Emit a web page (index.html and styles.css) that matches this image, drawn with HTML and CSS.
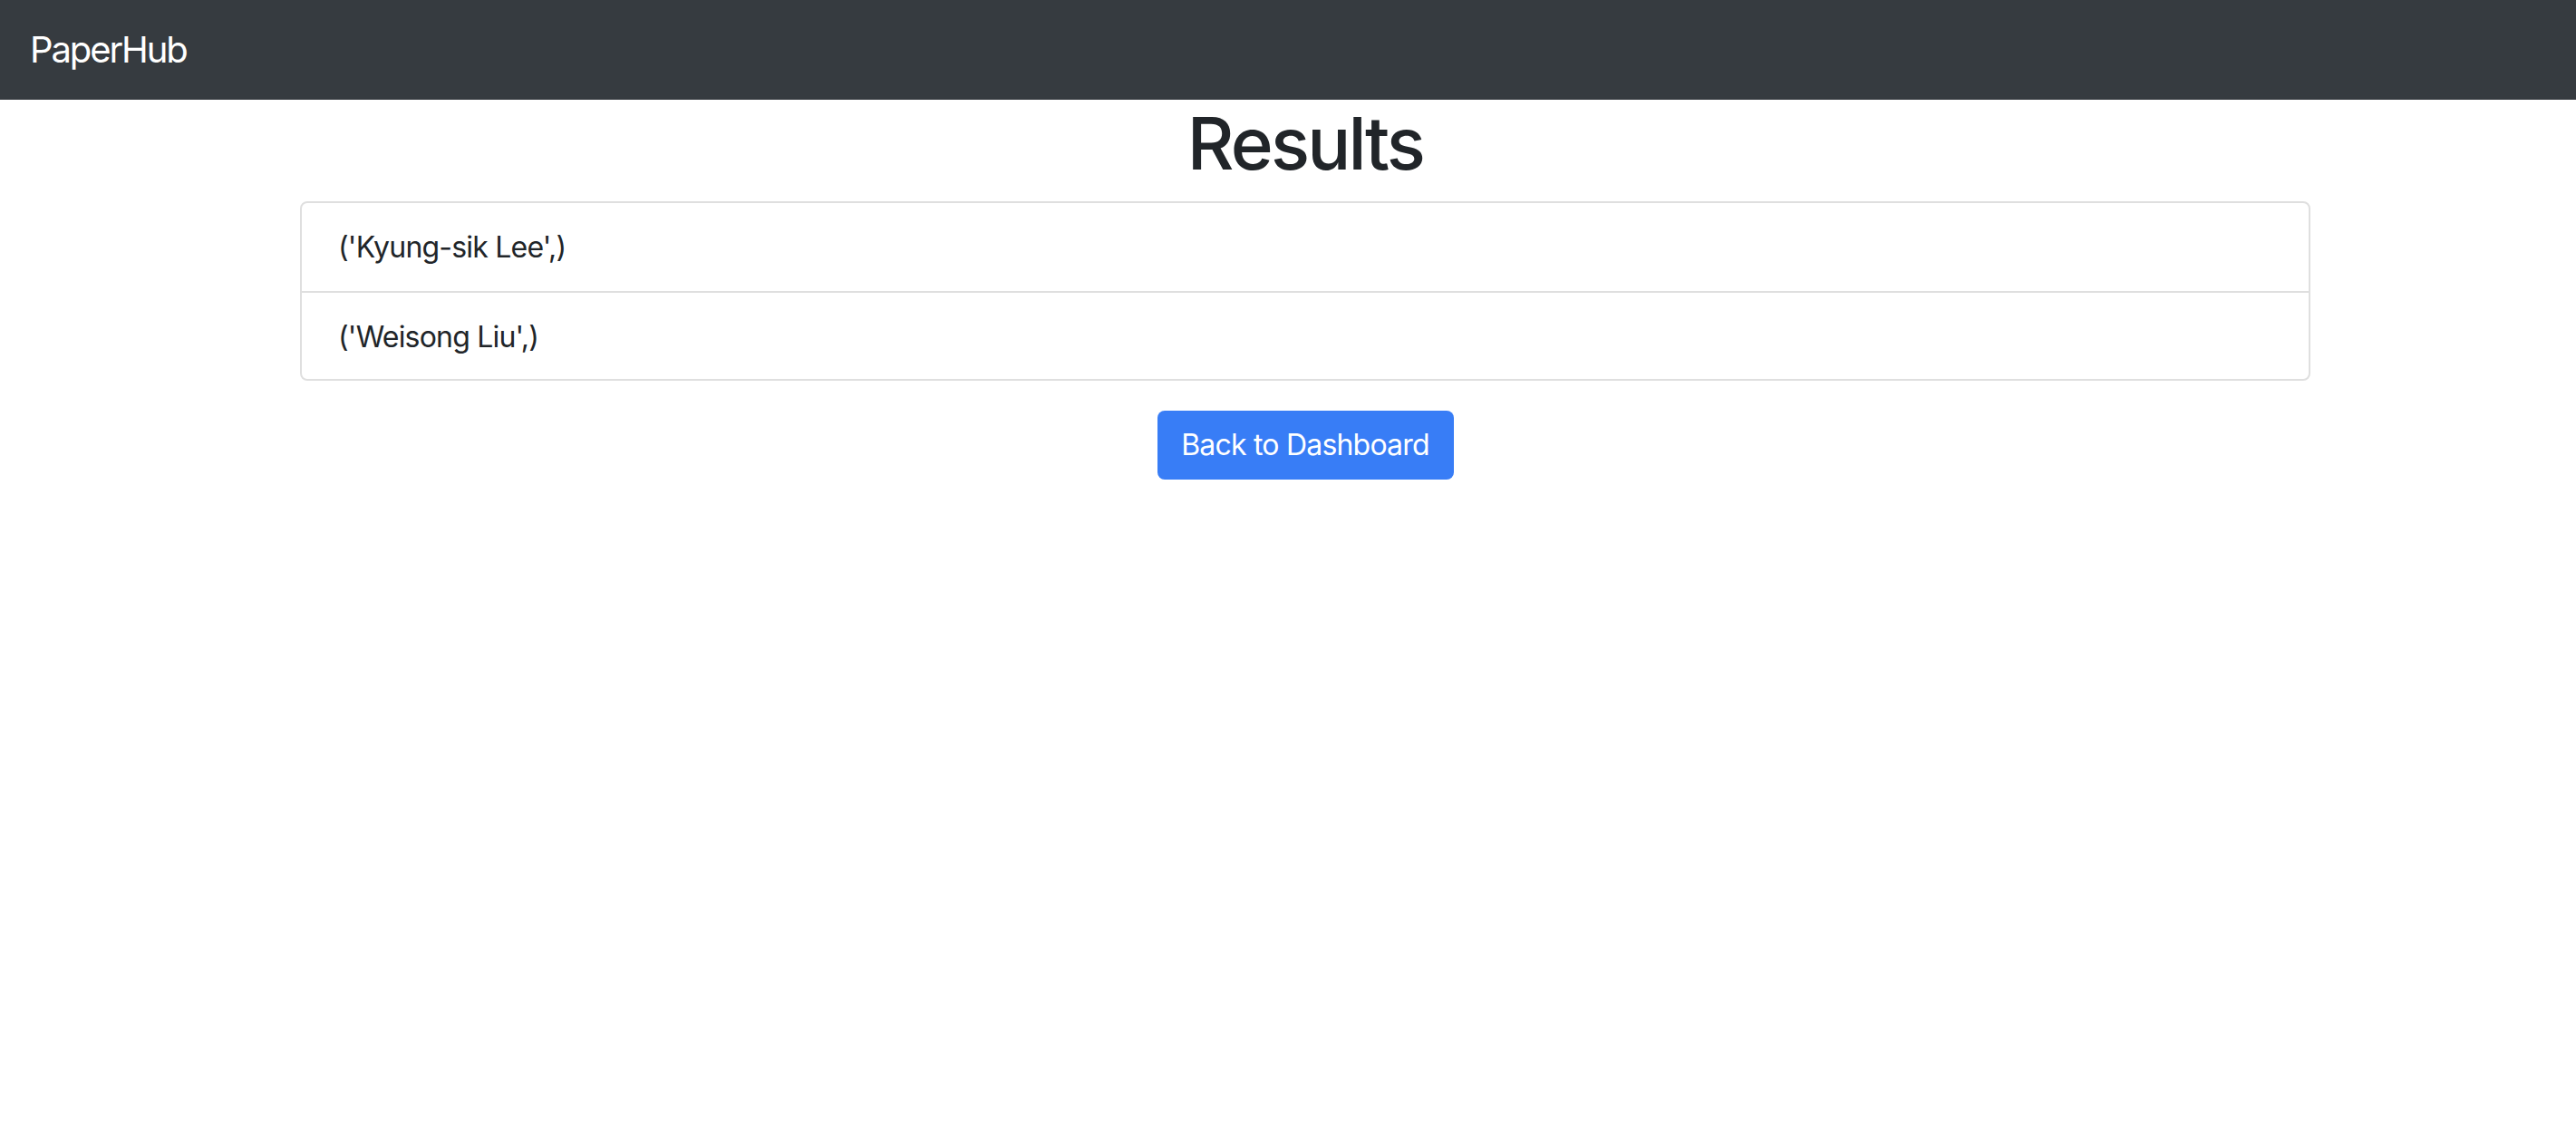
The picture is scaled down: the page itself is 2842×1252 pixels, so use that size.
FILE: index.html
```html
<!DOCTYPE html>
<html lang="en">
<head>
<meta charset="utf-8">
<title>PaperHub - Results</title>
<link rel="stylesheet" href="styles.css">
</head>
<body>
<nav class="navbar">
  <a class="brand" href="#">PaperHub</a>
</nav>
<main class="container">
  <h1 class="title">Results</h1>
  <ul class="list-group">
    <li class="list-item">('Kyung-sik Lee',)</li>
    <li class="list-item">('Weisong Liu',)</li>
  </ul>
  <div class="actions">
    <a class="btn" href="#">Back to Dashboard</a>
  </div>
</main>
</body>
</html>
```
FILE: styles.css
```css
* { box-sizing: border-box; }
html, body {
  margin: 0;
  padding: 0;
  background: #ffffff;
}
body {
  font-family: Inter, "Noto Sans", "Liberation Sans", sans-serif;
  font-size: 32px;
  line-height: 1.5;
  color: #212529;
  letter-spacing: -0.8px;
}
.navbar {
  height: 110px;
  background: #363b40;
  display: flex;
  align-items: center;
  padding: 0 33px;
}
.brand {
  color: #ffffff;
  text-decoration: none;
  font-size: 40px;
  line-height: 60px;
  letter-spacing: -2.1px;
}
.container {
  width: 2218px;
  margin-left: 331px;
}
.title {
  margin: 0 0 16px;
  font-size: 80px;
  font-weight: 500;
  line-height: 96px;
  text-align: center;
  letter-spacing: -2.8px;
}
.list-group {
  list-style: none;
  margin: 0;
  padding: 0;
  border: 2px solid #dfdfdf;
  border-radius: 8px;
}
.list-item {
  padding: 25px 40px 23px;
  line-height: 48px;
  height: 97px;
}
.list-item + .list-item {
  border-top: 2px solid #dfdfdf;
}
.actions {
  display: flex;
  justify-content: center;
  margin-top: 33px;
}
.btn {
  display: inline-block;
  background: #387df6;
  color: #ffffff;
  text-decoration: none;
  padding: 14px 0;
  line-height: 48px;
  border-radius: 8px;
  width: 327px;
  height: 76px;
  text-align: center;
  white-space: nowrap;
  letter-spacing: -0.8px;
}
```
